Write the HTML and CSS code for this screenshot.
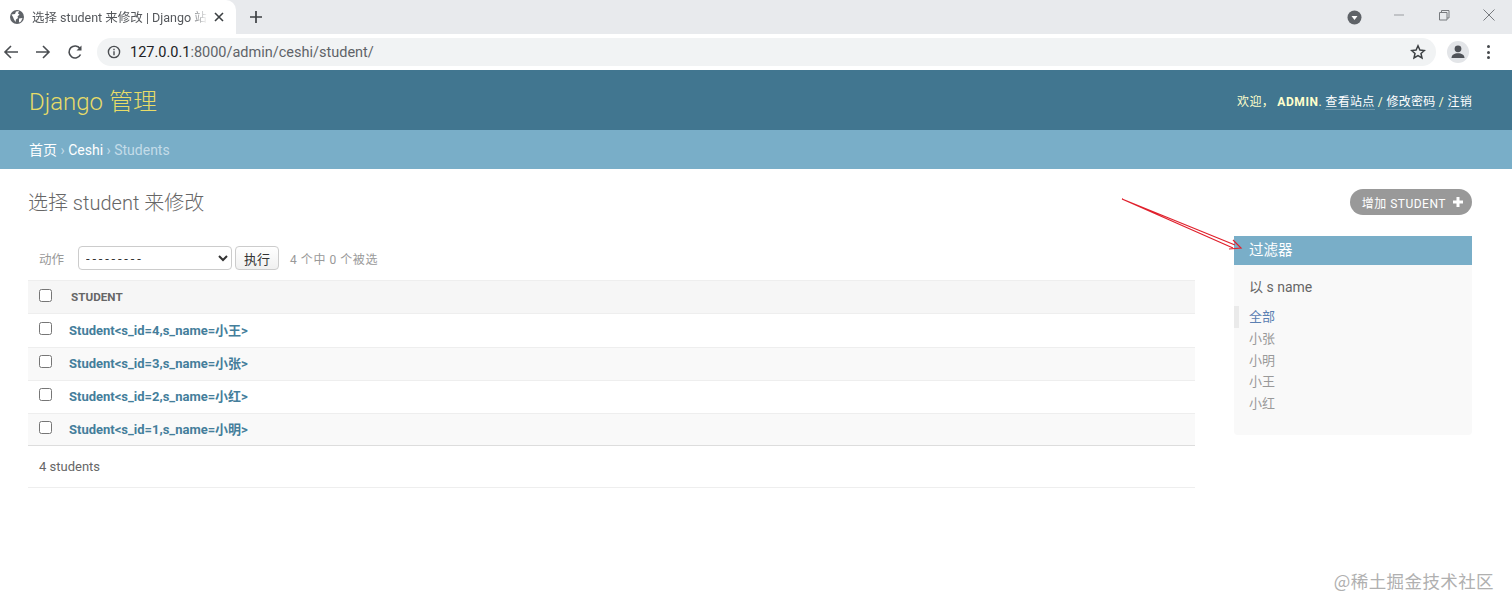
FILE: index.html
```html
<!DOCTYPE html>
<html lang="zh">
<head>
  <meta charset="UTF-8" />
  <title>选择 student 来修改 | Django 站点管理员</title>
  <link rel="stylesheet" href="styles.css">
</head>
<body>
<div class="tabstrip">
  <div class="tab">
    <svg class="globe" width="16" height="16" viewBox="0 0 16 16"><circle cx="8" cy="8" r="7" fill="#5f6368"/><path d="M2.5 5.5 6 5l1-2.5 3-.5-1 2.5 1.5 1-2 2 .5 1.5L7 10.5 6.5 13 5 10.5 4 8z" fill="#fff"/><path d="M10 9.5l3.5-.5-1.5 3.5-2 1z" fill="#fff"/></svg>
    <span class="tab-title">选择 student 来修改 | Django 站</span>
    <svg class="tab-x" width="10" height="10" viewBox="0 0 10 10"><path d="M1 1l8 8M9 1L1 9" stroke="#3c4043" stroke-width="1.6"/></svg>
  </div>
  <svg class="newtab" width="14" height="14" viewBox="0 0 14 14"><path d="M7 1v12M1 7h12" stroke="#3c4043" stroke-width="1.7"/></svg>
  <div class="winbtns">
    <svg class="media" width="15" height="15" viewBox="0 0 15 15"><circle cx="7.5" cy="7.5" r="7" fill="#5f6368"/><path d="M4.5 6h6l-3 4z" fill="#fff"/></svg>
    <svg class="win" width="12" height="12" viewBox="0 0 12 12"><path d="M1 6h10" stroke="#9a9da1"/></svg>
    <svg class="win" width="12" height="12" viewBox="0 0 12 12"><path d="M1.5 3.5h7.5v7.5H1.5zM3.5 3.5V1.5H11v7.5H9" fill="none" stroke="#777a7e"/></svg>
    <svg class="win" width="12" height="12" viewBox="0 0 12 12"><path d="M.5.5l11 11M11.500 .5l-11 11" stroke="#777a7e"/></svg>
  </div>
</div>
<div class="toolbar">
  <svg class="navicon" width="16" height="16" viewBox="0 0 16 16"><path d="M15 8H2M8 2L2 8l6 6" fill="none" stroke="#4a4d51" stroke-width="1.6"/></svg>
  <svg class="navicon" width="16" height="16" viewBox="0 0 16 16"><path d="M1 8h13M8 2l6 6-6 6" fill="none" stroke="#4a4d51" stroke-width="1.6"/></svg>
  <svg class="navicon" width="16" height="16" viewBox="0 0 16 16"><path d="M13.500 10.500A6 6 0 1 1 13 4.500" fill="none" stroke="#4a4d51" stroke-width="1.6"/><path d="M14.500 1.500v5h-5z" fill="#4a4d51"/></svg>
  <div class="omnibox">
    <svg width="14" height="14" viewBox="0 0 14 14"><circle cx="7" cy="7" r="5.600" fill="none" stroke="#4a4d51" stroke-width="1.400"/><path d="M7 6.200v4M7 3.800v1.400" stroke="#4a4d51" stroke-width="1.400"/></svg>
    <span class="url"><b>127.0.0.1</b>:8000/admin/ceshi/student/</span>
    <svg class="star" width="16" height="16" viewBox="0 0 16 16"><path d="M8 1.800l1.900 4.200 4.500.5-3.400 3 1 4.500L8 11.700 4 14l1-4.500-3.400-3 4.500-.5z" fill="none" stroke="#3c4043" stroke-width="1.500"/></svg>
  </div>
  <div class="avatar"><svg width="16" height="16" viewBox="0 0 16 16"><circle cx="8" cy="4.800" r="3.400" fill="#4f5257"/><path d="M1.500 14c0-3.200 3-4.800 6.500-4.800s6.500 1.600 6.500 4.800z" fill="#4f5257"/></svg></div>
  <div class="kebab"><i></i><i></i><i></i></div>
</div>

<div class="site-header">
  <div class="branding">Django 管理</div>
  <div class="user-tools">欢迎， <strong>ADMIN</strong>. <a>查看站点</a> / <a>修改密码</a> / <a>注销</a></div>
</div>
<div class="breadcrumbs"><a>首页</a> › <a>Ceshi</a> › Students</div>

<div class="content">
  <div class="title-row">
    <h1>选择 student 来修改</h1>
    <a class="addlink">增加 STUDENT<svg width="12" height="12" viewBox="0 0 12 12"><path d="M6 1v10M1 6h10" stroke="#fff" stroke-width="3"/></svg></a>
  </div>
  <div class="changelist">
    <div class="results">
      <div class="actions">
        <label>动作</label>
        <select><option>---------</option></select>
        <button>执行</button>
        <span class="counter">4 个中 0 个被选</span>
      </div>
      <div class="row head"><span class="box"></span><span class="col">STUDENT</span></div>
      <div class="row"><span class="box"></span><a>Student&lt;s_id=4,s_name=小王&gt;</a></div>
      <div class="row alt"><span class="box"></span><a>Student&lt;s_id=3,s_name=小张&gt;</a></div>
      <div class="row"><span class="box"></span><a>Student&lt;s_id=2,s_name=小红&gt;</a></div>
      <div class="row alt"><span class="box"></span><a>Student&lt;s_id=1,s_name=小明&gt;</a></div>
      <p class="paginator">4 students</p>
    </div>
    <div class="filter">
      <h2>过滤器</h2>
      <h3>以 s name</h3>
      <ul>
        <li class="selected">全部</li>
        <li>小张</li>
        <li>小明</li>
        <li>小王</li>
        <li>小红</li>
      </ul>
    </div>
  </div>
</div>

<svg class="arrow" width="130" height="60" viewBox="0 0 130 60">
  <path d="M1 1L114 47M1 1L112 50" fill="none" stroke="#e0202c" stroke-width="1.2"/>
  <path d="M112 42L120 50L108 51" fill="none" stroke="#e0202c" stroke-width="1.2"/>
</svg>
<div class="watermark">@稀土掘金技术社区</div>
</body>
</html>
```

FILE: styles.css
```css
* { box-sizing: border-box; }
body {
  margin: 0;
  height: 607px;
  overflow: hidden;
  position: relative;
  font-family: Roboto, "Noto Sans CJK SC", sans-serif;
  font-size: 13px;
  color: #333;
  background: #fff;
}
a { text-decoration: none; }

/* browser chrome */
.tabstrip {
  height: 34px;
  background: #e8eaed;
  display: flex;
  align-items: center;
}
.tab {
  width: 236px;
  height: 34px;
  background: #fff;
  border-radius: 0 10px 0 0;
  display: flex;
  align-items: center;
  padding: 0 10px 0 9px;
  flex: none;
}
.tab-title {
  width: 176px;
  margin-left: 7px;
  margin-top: -2px;
  font-size: 12.500px;
  color: #55585c;
  white-space: nowrap;
  -webkit-mask-image: linear-gradient(90deg, #000 90%, transparent);
  mask-image: linear-gradient(90deg, #000 90%, transparent);
}
.tab-x { margin-left: 6px; }
.newtab { margin-left: 13px; }
.winbtns {
  margin-left: auto;
  display: flex;
  align-items: center;
  padding-right: 17px;
}
.media { margin-right: 31px; }
.win { margin-left: 33px; margin-top: -4px; }
.media + .win { margin-left: 0; }

.toolbar {
  height: 36px;
  display: flex;
  align-items: center;
  padding: 0 17px 0 3px;
  background: #fff;
}
.navicon { margin-right: 16px; }
.navicon:nth-child(3) { margin-right: 14px; }
.omnibox {
  width: 1339px;
  height: 28px;
  background: #f1f3f4;
  border-radius: 14px;
  display: flex;
  align-items: center;
  padding: 0 10px;
}
.url {
  margin-left: 9px;
  font-size: 14.500px;
  color: #5f6368;
  white-space: nowrap;
}
.url b { font-weight: 400; color: #202124; }
.star { margin-left: auto; }
.avatar {
  width: 22px;
  height: 22px;
  margin-left: 11px;
  border-radius: 50%;
  background: #e3e5e8;
  display: flex;
  align-items: center;
  justify-content: center;
}
.kebab {
  margin-left: 18px;
  display: flex;
  flex-direction: column;
  gap: 2.500px;
}
.kebab i {
  width: 3px;
  height: 3px;
  border-radius: 50%;
  background: #45484c;
}

/* django admin */
.site-header {
  height: 60px;
  background: #417690;
  display: flex;
  align-items: center;
  justify-content: space-between;
  padding: 0 40px 0 29px;
}
.branding {
  margin-top: -2px;
  font-size: 24px;
  font-weight: 300;
  color: #e8dc68;
}
.user-tools {
  font-size: 12px;
  letter-spacing: 0.3px;
  color: #ffc;
  white-space: pre-wrap;
}
.user-tools strong { letter-spacing: 0.6px; }
.user-tools a {
  color: #fff;
  border-bottom: 1px solid rgba(255,255,255,0.25);
}
.breadcrumbs {
  height: 39px;
  background: #79aec8;
  padding: 0 29px;
  line-height: 41px;
  font-size: 14px;
  color: #c4dce8;
}
.breadcrumbs a { color: #fff; }

.content { padding: 20px 40px 0 28px; }
.title-row {
  display: flex;
  justify-content: space-between;
  align-items: flex-start;
}
h1 {
  margin: 0;
  font-size: 20px;
  font-weight: 300;
  color: #666;
  line-height: 28px;
}
.addlink {
  height: 26px;
  border-radius: 13px;
  background: #999;
  color: #fff;
  font-size: 12px;
  letter-spacing: 0.5px;
  display: flex;
  align-items: center;
  gap: 6px;
  padding: 0 8px 0 12px;
}
.changelist {
  display: flex;
  gap: 39px;
  margin-top: 19px;
  align-items: flex-start;
}
.results { width: 1167px; }
.actions {
  height: 44px;
  display: flex;
  align-items: center;
  padding-left: 11px;
  color: #999;
}
.actions label { font-size: 12.500px; margin-right: 14px; }
.actions select {
  width: 154px;
  height: 24px;
  font-family: Roboto, sans-serif;
  font-size: 13px;
  letter-spacing: 2.800px;
  color: #333;
  background: #fff;
  border: 1px solid #ccc;
  border-radius: 4px;
  padding-left: 3px;
}
.actions button {
  width: 44px;
  height: 24px;
  margin-left: 3px;
  padding: 0;
  font-family: "Noto Sans CJK SC", sans-serif;
  font-size: 13px;
  color: #333;
  background: linear-gradient(#fff, #f0f0f0);
  border: 1px solid #ccc;
  border-radius: 4px;
}
.counter { margin-left: 11px; font-size: 12px; letter-spacing: 0.55px; }
.row {
  height: 32.900px;
  display: flex;
  align-items: center;
  padding-left: 11px;
  border-top: 1px solid #eee;
  font-size: 13px;
}
.row.alt { background: #f9f9f9; }
.row.head {
  height: 34px;
  background: #f6f6f6;
  border-top: 1px solid #eee;
  border-bottom: 1px solid #eee;
}
.row.head + .row { border-top: 0; }
.row:nth-child(6) { border-bottom: 1px solid #ddd; }
.box {
  width: 13px;
  height: 13px;
  margin-top: -4px;
  border: 1px solid #767676;
  border-radius: 2.500px;
  background: #fff;
  flex: none;
}
.row a {
  margin-left: 17px;
  margin-top: -2px;
  font-weight: 700;
  color: #447e9b;
  white-space: nowrap;
}
.col {
  margin-left: 19px;
  font-size: 11.700px;
  font-weight: 700;
  color: #666;
}
.paginator {
  margin: 0;
  height: 42px;
  line-height: 42px;
  padding-left: 11px;
  color: #666;
  font-size: 13px;
  border-bottom: 1px solid #eee;
}
.filter {
  width: 238px;
  height: 199px;
  background: #f9f9f9;
  border-radius: 0 0 4px 4px;
}
.filter h2 {
  margin: 0;
  height: 29px;
  line-height: 29px;
  padding-left: 15px;
  background: #79aec8;
  color: #fff;
  font-size: 14.500px;
  font-weight: 400;
}
.filter h3 {
  margin: 12px 0 0;
  padding-left: 15px;
  font-size: 14px;
  font-weight: 400;
  line-height: 20px;
  color: #666;
}
.filter ul {
  list-style: none;
  margin: 9px 0 0;
  padding: 0;
}
.filter li {
  height: 21.800px;
  line-height: 21.800px;
  padding-left: 15px;
  color: #999;
  font-size: 13px;
}
.filter li.selected {
  color: #5b80b2;
  border-left: 5px solid #eaeaea;
  padding-left: 10px;
}

/* annotation over the page */
.arrow {
  position: absolute;
  left: 1121px;
  top: 198px;
}
.watermark {
  position: absolute;
  right: 18px;
  top: 568px;
  font-size: 17.500px;
  color: #b0b0b0;
  font-family: "Noto Sans CJK SC", sans-serif;
  letter-spacing: 0.4px;
}
```
